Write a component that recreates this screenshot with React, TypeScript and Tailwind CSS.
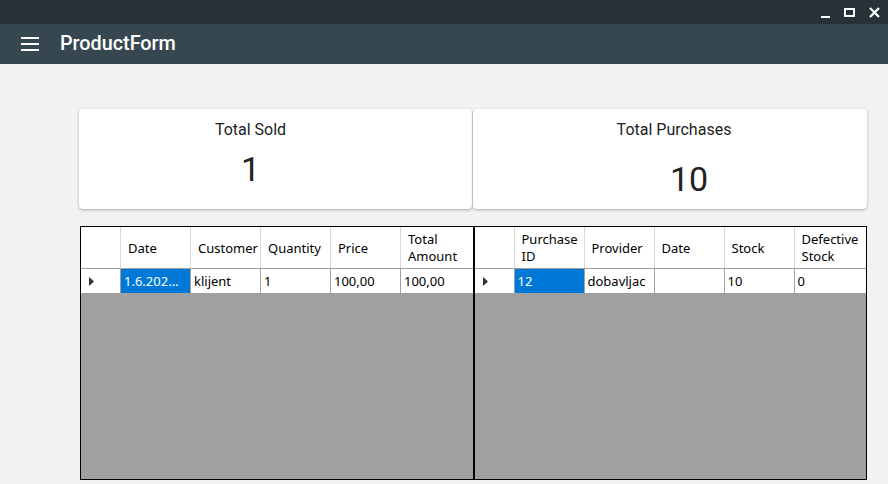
import React from "react";

type Col = { label: string; value: string; selected?: boolean };

const salesCols: Col[] = [
  { label: "Date", value: "1.6.202...", selected: true },
  { label: "Customer", value: "klijent" },
  { label: "Quantity", value: "1" },
  { label: "Price", value: "100,00" },
  { label: "Total Amount", value: "100,00" },
];

const purchaseCols: Col[] = [
  { label: "Purchase ID", value: "12", selected: true },
  { label: "Provider", value: "dobavljac" },
  { label: "Date", value: "" },
  { label: "Stock", value: "10" },
  { label: "Defective Stock", value: "0" },
];

function Grid({ cols }: { cols: Col[] }) {
  return (
    <div className="flex-1 flex flex-col bg-[#a0a0a0] border border-black">
      <div className="flex h-[42px] bg-white border-b border-[#a0a0a0]">
        <div className="w-[40px] border-r border-[#d8d8d8]" />
        {cols.map((c, i) => (
          <div
            key={i}
            className="w-[70px] flex items-center px-[7px] pt-[1px] leading-[17px] border-r border-[#d8d8d8] last:border-r-0 last:flex-1"
          >
            <span className="whitespace-pre-line">{c.label.replace(" ", "\n")}</span>
          </div>
        ))}
      </div>
      <div className="flex h-[25px] bg-white border-b border-[#a0a0a0]">
        <div className="w-[40px] flex items-center pl-[8px] border-r border-[#a0a0a0]">
          <svg width="5" height="9" viewBox="0 0 5 9">
            <path d="M0 0 L5 4.5 L0 9 Z" fill="#333" />
          </svg>
        </div>
        {cols.map((c, i) => (
          <div
            key={i}
            className={`w-[70px] flex items-center px-[3px] pt-[1px] border-r border-[#a0a0a0] last:border-r-0 last:flex-1 whitespace-nowrap overflow-hidden ${
              c.selected ? "bg-[#0078d7] text-white" : ""
            }`}
          >
            {c.value}
          </div>
        ))}
      </div>
      <div className="flex-1" />
    </div>
  );
}

function Card({
  title,
  value,
  boxClass,
  valueClass,
}: {
  title: string;
  value: string;
  boxClass: string;
  valueClass: string;
}) {
  return (
    <div
      className={`h-[100px] bg-white rounded-[4px] shadow-[0_1px_3px_rgba(0,0,0,0.3)] flex flex-col items-center text-[#222] ${boxClass}`}
    >
      <div className="mt-[11px] text-[16px] leading-[20px]">{title}</div>
      <div className={`text-[34px] leading-[40px] ${valueClass}`}>{value}</div>
    </div>
  );
}

export default function App() {
  return (
    <div className="w-[888px] h-[484px] overflow-hidden flex flex-col bg-[#f2f2f2] font-['Roboto',sans-serif]">
      <div className="h-[24px] bg-[#263238] flex items-center justify-end pr-[8px] gap-[14px] text-white">
        <div className="w-[9px] h-[2px] bg-white mt-[10px]" />
        <div className="w-[11px] h-[9px] border-2 border-white" />
        <svg width="11" height="11" viewBox="0 0 11 11">
          <path d="M1 1 L10 10 M10 1 L1 10" stroke="white" strokeWidth="2.2" />
        </svg>
      </div>
      <div className="h-[40px] bg-[#37474f] flex items-center text-white">
        <div className="ml-[21px] w-[18px] flex flex-col gap-[4px]">
          <div className="h-[2px] bg-white" />
          <div className="h-[2px] bg-white" />
          <div className="h-[2px] bg-white" />
        </div>
        <div className="ml-[21px] text-[19.8px] font-medium">ProductForm</div>
      </div>
      <div className="flex-1 flex flex-col pl-[79px] pr-[21px] pt-[45px]">
        <div className="flex gap-[1px]">
          <Card title="Total Sold" value="1" boxClass="w-[393px] pr-[50px]" valueClass="mt-[9px]" />
          <Card
            title="Total Purchases"
            value="10"
            boxClass="w-[394px] pl-[8px]"
            valueClass="mt-[19px] ml-[30px]"
          />
        </div>
        <div className="flex mt-[17px] h-[254px] ml-[1px] text-[13px] text-black font-['Noto_Sans',sans-serif]">
          <Grid cols={salesCols} />
          <Grid cols={purchaseCols} />
        </div>
      </div>
    </div>
  );
}
